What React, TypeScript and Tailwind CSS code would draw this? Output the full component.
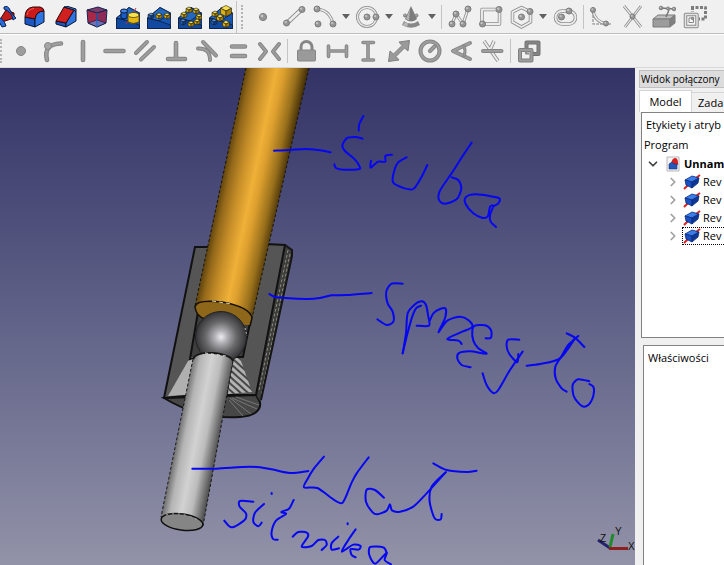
import type { ReactNode } from "react"
import { ChevronDown, ChevronRight } from "lucide-react"

type Tool = { label: string; icon: ReactNode; menu?: boolean }
type Point = [number, number]

/* ---------- Icon building blocks ---------- */

function Icon({ children }: { children: ReactNode }) {
    return (
        <svg viewBox="0 0 24 24" className="w-6 h-6 shrink-0" fill="none" strokeLinejoin="round">
            {children}
        </svg>
    )
}

function Node({ x, y, r = 3 }: { x: number; y: number; r?: number }) {
    return (
        <>
            <circle cx={x} cy={y} r={r} fill="#959595" stroke="#7d7d7d" />
            <circle cx={x - r * 0.3} cy={y - r * 0.3} r={r * 0.4} fill="#c4c4c4" />
        </>
    )
}

// Hollow light line used by the sketch geometry icons
function Tube({ d, w = 3 }: { d: string; w?: number }) {
    return (
        <>
            <path d={d} stroke="#8c8c8c" strokeWidth={w} />
            <path d={d} stroke="#ececec" strokeWidth={w - 1.6} />
        </>
    )
}

// Solid line used by the constraint icons
function Bar({ d, w = 4.6 }: { d: string; w?: number }) {
    return (
        <>
            <path d={d} stroke="#868686" strokeWidth={w} strokeLinecap="round" />
            <path d={d} stroke="#9e9e9e" strokeWidth={w - 2} strokeLinecap="round" />
        </>
    )
}

function Cube({ x, y, s = 6, tone = "yellow" }: { x: number; y: number; s?: number; tone?: "yellow" | "blue" }) {
    const c = tone === "yellow" ? ["#f8e04a", "#dcae14", "#a87f08"] : ["#4f94e8", "#1f63c8", "#0d3f96"]
    const h = s / 2
    return (
        <g stroke="#1c1c10" strokeWidth={0.6}>
            <path d={`M${x} ${y - h}l${h} ${h / 2}l${-h} ${h / 2}l${-h} ${-h / 2}z`} fill={c[0]} />
            <path d={`M${x - h} ${y - h / 2}l${h} ${h / 2}v${h}l${-h} ${-h / 2}z`} fill={c[1]} />
            <path d={`M${x + h} ${y - h / 2}l${-h} ${h / 2}v${h}l${h} ${-h / 2}z`} fill={c[2]} />
        </g>
    )
}

function Base() {
    return (
        <g stroke="#0a1c3c" strokeWidth={0.8}>
            <path d="M.5 13L13 2.5L23.5 8V23.5H.5z" fill="#1556b4" />
            <path d="M.5 13L13 2.5L23.5 8L12 16z" fill="#2468c0" />
            <path d="M.5 13L12 16L23.5 20V23.5H.5z" fill="#1249a0" />
        </g>
    )
}

/* ---------- Toolbars ---------- */

const partTools: Tool[] = [
    {
        label: "Groove",
        icon: (
            <Icon>
                <path d="M9 13L14 5L22 8V13L10 17z" fill="#c01c1c" stroke="#400" />
                <path d="M12 2Q16 0 18 5T24 13L21 15Q20 7 12 4z" fill="#2b6bd8" stroke="#07204f" />
                <path d="M6 12Q12 14 14 21L10 22L6 15z" fill="#2b6bd8" stroke="#07204f" />
            </Icon>
        ),
    },
    {
        label: "Fillet",
        icon: (
            <Icon>
                <path d="M2 12V19L12 22V14z" fill="#1b55c4" stroke="#07152f" />
                <path d="M12 22V14Q13 6 21 6V17z" fill="#2d74e0" stroke="#07152f" />
                <path d="M2 12Q2 3 10 2L17 2Q21 3 21 6Q13 6 12 14z" fill="#cc1a1a" stroke="#2c0505" />
                <path d="M4 10Q5 4 11 3.500" stroke="#ec5a50" />
            </Icon>
        ),
    },
    {
        label: "Chamfer",
        icon: (
            <Icon>
                <path d="M2 16V19L12 22V18z" fill="#1b55c4" stroke="#07152f" />
                <path d="M12 22V18L20 5L22 7V16z" fill="#2d74e0" stroke="#07152f" />
                <path d="M2 16L10 2L20 5L12 18z" fill="#d02020" stroke="#2c0505" />
                <path d="M10 2L14 1.500L22 4V7L20 5z" fill="#3f86ec" stroke="#07152f" />
            </Icon>
        ),
    },
    {
        label: "Draft",
        icon: (
            <Icon>
                <path d="M2 5L13 2L22 5L12 8z" fill="#7a3c6c" stroke="#16264f" />
                <path d="M2 5L12 8V22L3 18z" fill="#a8284a" stroke="#16264f" />
                <path d="M22 5L12 8V22L21 18z" fill="#8c2a58" stroke="#16264f" />
                <path d="M3 18L12 22L21 18L12 15z" fill="#5a8fe0" stroke="#16264f" opacity=".7" />
                <path d="M12 8V22" stroke="#2f6ad0" />
            </Icon>
        ),
    },
    {
        label: "Mirrored",
        icon: (
            <Icon>
                <Base />
                <path d="M5 6v7q3 2 6 0V6z" fill="#1b5cc6" stroke="#061a3e" />
                <ellipse cx="8" cy="6" rx="3.500" ry="2" fill="#3f86e4" stroke="#061a3e" />
                <path d="M10 19L20 3" stroke="#c03040" />
                <path d="M12 10v7q5 3 11 0v-7z" fill="#e2b714" stroke="#4a3a04" strokeWidth=".8" />
                <ellipse cx="17.500" cy="10" rx="5.500" ry="2.500" fill="#fae24e" stroke="#4a3a04" strokeWidth=".8" />
            </Icon>
        ),
    },
    {
        label: "Linear pattern",
        icon: (
            <Icon>
                <Base />
                <Cube x={4} y={11} tone="blue" />
                <Cube x={12} y={11} />
                <Cube x={20} y={11} />
            </Icon>
        ),
    },
    {
        label: "Polar pattern",
        icon: (
            <Icon>
                <Base />
                <Cube x={11} y={5} />
                <Cube x={18} y={6} />
                <Cube x={6} y={10} />
                <Cube x={21} y={12} />
                <Cube x={5} y={17} tone="blue" />
                <Cube x={19} y={17} />
                <Cube x={13} y={19} />
            </Icon>
        ),
    },
    {
        label: "Multi transform",
        icon: (
            <Icon>
                <Base />
                <Cube x={17} y={6} s={11} />
                <Cube x={6} y={9} />
                <Cube x={11} y={13} s={7} />
                <Cube x={5} y={17} tone="blue" />
                <Cube x={17} y={19} s={7} />
            </Icon>
        ),
    },
]

const drawTools: Tool[] = [
    { label: "Point", icon: <Icon><Node x={12} y={12} r={3.6} /></Icon> },
    {
        label: "Line",
        icon: <Icon><Tube d="M5 18L20 4" w={4.500} /><Node x={4.500} y={18} /><Node x={20} y={4.500} /></Icon>,
    },
    {
        label: "Arc",
        menu: true,
        icon: (
            <Icon>
                <Tube d="M4 4Q17 5 20 19" />
                <Node x={4} y={4} />
                <Node x={5} y={19} />
                <Node x={20} y={19} />
            </Icon>
        ),
    },
    {
        label: "Circle",
        menu: true,
        icon: (
            <Icon>
                <Tube d="M1.500 12a9.500 9.500 0 1 0 19 0a9.500 9.500 0 1 0-19 0" />
                <Node x={11} y={12} />
                <Node x={20} y={12} />
            </Icon>
        ),
    },
    {
        label: "Conic",
        menu: true,
        icon: (
            <Icon>
                <path d="M12 1L18 14Q12 19 6 14z" fill="#7c7c7c" />
                <path d="M11 4L7 14L10 15.500z" fill="#b4b4b4" />
                <path d="M5 16Q12 21 19 16L21 20Q12 25.500 3 20z" fill="#888" />
                <path d="M6 17L9 18.500L8 22L4 20z" fill="#b8b8b8" />
                <Node x={6} y={10.500} r={1.500} />
                <Node x={17.500} y={10.500} r={1.500} />
            </Icon>
        ),
    },
]

const shapeTools: Tool[] = [
    {
        label: "Polyline",
        icon: (
            <Icon>
                <Tube d="M4 19L8 9L15 19L20 4" />
                <Node x={4} y={19} />
                <Node x={8} y={9} />
                <Node x={15} y={19} />
                <Node x={20} y={4} />
            </Icon>
        ),
    },
    {
        label: "Rectangle",
        icon: <Icon><Tube d="M3 4.500H20.500V19H3z" w={3.500} /><Node x={3.500} y={19} /><Node x={20} y={4.500} /></Icon>,
    },
    {
        label: "Polygon",
        menu: true,
        icon: (
            <Icon>
                <Tube d="M11.500 2.500L20.500 7V17L11.500 22L2.500 17V7z" w={3.500} />
                <Node x={11.500} y={12} />
                <Node x={20} y={6.500} />
            </Icon>
        ),
    },
    {
        label: "Slot",
        icon: (
            <Icon>
                <Tube d="M9 6H16a6.500 6.500 0 0 1 0 13H9a6.500 6.500 0 0 1 0-13z" w={3.500} />
                <Node x={8.500} y={12} />
                <Node x={16} y={6} />
            </Icon>
        ),
    },
]

const editTools: Tool[] = [
    {
        label: "Fillet edge",
        icon: (
            <Icon>
                <path d="M3 2V19H22" stroke="#a4a4a4" strokeWidth="1.500" strokeDasharray="3 1" />
                <Tube d="M3 6Q5 17 17 19" />
                <Node x={3} y={5} r={2.500} />
                <Node x={16} y={18.500} r={2.500} />
            </Icon>
        ),
    },
    { label: "Trim", icon: <Icon><Tube d="M3 1L20 22M20 1L4 22" w={2.800} /><Node x={11.500} y={11.500} r={2.500} /></Icon> },
    {
        label: "External geometry",
        icon: (
            <Icon>
                <path d="M1 14L6 10H23L18 14z" fill="#bdbdbd" stroke="#7c7c7c" />
                <path d="M1 14H18V22H1z" fill="#9c9c9c" stroke="#7c7c7c" />
                <path d="M18 14L23 10V18L18 22z" fill="#808080" stroke="#7c7c7c" />
                <path d="M14 12L17 5M9 3L22 4" stroke="#777" strokeWidth="1.500" />
                <Node x={9} y={3} r={1.800} />
                <Node x={16} y={3.500} r={1.500} />
                <Node x={22} y={4} r={1.800} />
            </Icon>
        ),
    },
    {
        label: "Carbon copy",
        icon: (
            <Icon>
                <path d="M8 2.500H22.500V14H16M9.500 2V7" stroke="#7c7c7c" strokeWidth="3" strokeDasharray="3 1.500" />
                <path d="M2.500 9.500H14V21.500H2.500z" stroke="#8c8c8c" strokeWidth="3.500" fill="#f4f4f4" />
                <path d="M2.500 9.500H14V21.500H2.500z" stroke="#e4e4e4" strokeWidth="1.500" />
                <path d="M6 13H10.500V17.500H6z" stroke="#858585" fill="#fafafa" />
                <Node x={9.500} y={13.500} r={1.200} />
            </Icon>
        ),
    },
]

const geometricTools: Tool[] = [
    { label: "Coincident", icon: <Icon><circle cx="12" cy="12" r="4.500" fill="#9e9e9e" stroke="#868686" /></Icon> },
    {
        label: "Point on object",
        icon: <Icon><Bar d="M7 21Q3 5 21 4.500" /><circle cx="8" cy="7" r="3.500" fill="#a6a6a6" stroke="#868686" /></Icon>,
    },
    { label: "Vertical", icon: <Icon><Bar d="M12 3V21" /></Icon> },
    { label: "Horizontal", icon: <Icon><Bar d="M3.500 12H21.500" /></Icon> },
    { label: "Parallel", icon: <Icon><Bar d="M3 14L14 3M8 20.500L21 8" w={4} /></Icon> },
    { label: "Perpendicular", icon: <Icon><Bar d="M12 4V19M4 20H21" /></Icon> },
    { label: "Tangent", icon: <Icon><Bar d="M3 9.500Q15 9 15 21M8 3L21 16.500" w={4} /></Icon> },
    { label: "Equal", icon: <Icon><Bar d="M6 7.500H19M6 17H19" /></Icon> },
    { label: "Symmetric", icon: <Icon><Bar d="M3 5L9 12.500L3 20M22 5L16 12.500L22 20" w={4} /></Icon> },
]

const dimensionTools: Tool[] = [
    {
        label: "Lock",
        icon: (
            <Icon>
                <path d="M7 12V8a5.500 5.500 0 0 1 11 0V12" stroke="#868686" strokeWidth="3" />
                <rect x="3.500" y="11" width="18" height="11" rx="1" fill="#9a9a9a" stroke="#868686" />
            </Icon>
        ),
    },
    { label: "Horizontal distance", icon: <Icon><Bar d="M3.500 7V17.500M21.500 7V17.500M4 12H21" w={3.600} /></Icon> },
    { label: "Vertical distance", icon: <Icon><Bar d="M7 3.500H17.500M7 21H17.500M12 4V21" w={3.600} /></Icon> },
    {
        label: "Distance",
        icon: (
            <Icon>
                <path d="M22.500 1.500L21 12L17.500 9L9 17.500L12 21L1.500 22.500L3 12L6.500 15L15 6.500L12 3z" fill="#9a9a9a" stroke="#808080" />
            </Icon>
        ),
    },
    {
        label: "Radius",
        icon: <Icon><Bar d="M2.500 12a9.500 9.500 0 1 0 19 0a9.500 9.500 0 1 0-19 0" w={4} /><Bar d="M12 12L16.500 7.500" w={4} /></Icon>,
    },
    { label: "Angle", icon: <Icon><Bar d="M21 4L4 12L21 20" w={4} /><Bar d="M15 7Q17 12 15 17" w={3} /></Icon> },
    { label: "Refraction", icon: <Icon><Tube d="M4 2L18 22M14 2L10 11" w={3.500} /><Bar d="M3 12H21.500" w={4} /></Icon> },
]

const toggleTools: Tool[] = [
    {
        label: "Toggle reference",
        icon: (
            <Icon>
                <path d="M9.500 3.500H21.500V15H9.500z" stroke="#707070" strokeWidth="4" />
                <path d="M9.500 3.500H21.500V15H9.500z" stroke="#868686" strokeWidth="2" />
                <path d="M3 11H14.500V21.500H3z" stroke="#808080" strokeWidth="4" fill="#f0f0f0" />
                <path d="M3 11H14.500V21.500H3z" stroke="#9c9c9c" strokeWidth="2" />
                <path d="M9 12V14.500H12" stroke="#8a8a8a" strokeWidth="2" />
            </Icon>
        ),
    },
]

function ToolGroup({ tools }: { tools: Tool[] }) {
    return (
        <>
            {tools.map((tool) => (
                <div key={tool.label} className="flex shrink-0">
                    <button type="button" aria-label={tool.label} className="w-[31px] h-8 flex items-center justify-center">
                        {tool.icon}
                    </button>
                    {tool.menu && (
                        <button type="button" aria-label={`${tool.label} menu`} className="w-3 h-8 flex items-center justify-center">
                            <svg viewBox="0 0 8 5" className="w-2 h-[5px]">
                                <path d="M0 0H8L4 5z" fill="#606060" />
                            </svg>
                        </button>
                    )}
                </div>
            ))}
        </>
    )
}

function Separator() {
    return (
        <div className="w-1.5 h-6 shrink-0 flex justify-center">
            <div className="w-px bg-[#c4c4c4]"></div>
        </div>
    )
}

function Handle() {
    return <div className="w-0.5 h-6 shrink-0 border-l-2 border-dotted border-[#b4b4b4]"></div>
}

/* ---------- 3D view ---------- */

// Freehand pen strokes. Each sheet has its own origin and is drawn at a third of its size.
const sheets: { name: string; x: number; y: number; strokes: Point[][] }[] = [
    {
        name: "śruba",
        x: 290,
        y: 100,
        strokes: [
            [[-48, 152], [0, 150], [45, 147], [90, 151], [122, 157]],
            [[220, 48], [208, 72], [206, 92]],
            [[218, 116], [195, 111], [170, 115], [157, 137], [165, 153], [195, 179], [210, 202], [205, 208], [160, 209], [138, 204], [133, 193]],
            [[243, 182], [242, 203], [264, 185], [286, 185], [286, 168], [306, 164]],
            [[350, 172], [324, 188], [312, 215], [309, 247], [340, 264], [370, 267], [395, 230], [412, 195]],
            [[545, 128], [520, 165], [485, 220], [450, 272], [447, 300], [465, 311], [500, 298], [514, 265], [505, 240], [485, 232]],
            [[612, 318], [625, 310], [626, 294], [560, 283], [528, 291], [527, 312], [550, 340], [578, 354], [594, 348], [600, 320], [610, 318], [600, 345], [602, 365], [618, 381]],
        ],
    },
    {
        name: "sprzęgło",
        x: 260,
        y: 270,
        strokes: [
            [[28, 72], [50, 82], [140, 87], [180, 84], [215, 76], [260, 75], [335, 69]],
            [[428, 41], [395, 41], [379, 65], [383, 100], [398, 125], [400, 155], [380, 165], [352, 148]],
            [[428, 250], [438, 190], [443, 130], [465, 103], [485, 94], [498, 105], [505, 140], [507, 167], [470, 167]],
            [[428, 250], [440, 200], [455, 145], [468, 115], [483, 107]],
            [[510, 150], [520, 130], [540, 117], [557, 116], [555, 145], [535, 187], [562, 152], [600, 140], [625, 150], [637, 171], [600, 188], [562, 207], [595, 212], [605, 222]],
            [[677, 205], [693, 203], [693, 180], [675, 166], [645, 167], [637, 180], [640, 212], [655, 235], [680, 251], [630, 244], [598, 249], [592, 265], [605, 285], [632, 292]],
            [[778, 209], [745, 209], [740, 228], [748, 252], [772, 277], [775, 252]],
            [[788, 245], [750, 300], [715, 360], [700, 369], [680, 345], [668, 310]],
            [[800, 287], [840, 282], [900, 265], [945, 205]],
            [[955, 198], [925, 225], [905, 258], [886, 290], [887, 325], [905, 355], [920, 365]],
            [[920, 190], [945, 203], [973, 231]],
            [[988, 342], [1001, 352], [1000, 378], [985, 405], [965, 408], [942, 380], [938, 345], [955, 328], [988, 334]],
        ],
    },
    {
        name: "wał silnika",
        x: 190,
        y: 440,
        strokes: [
            [[7, 86], [80, 86], [180, 80], [240, 87], [300, 99], [355, 93]],
            [[402, 50], [370, 88], [354, 115], [342, 142], [382, 144], [430, 178], [458, 188], [484, 130], [500, 100], [536, 52]],
            [[582, 173], [555, 150], [530, 149], [528, 185], [548, 217], [562, 223], [590, 212], [600, 193], [606, 211], [630, 215], [670, 200], [710, 160], [767, 97]],
            [[767, 97], [725, 140], [719, 185], [734, 235], [752, 238], [755, 222]],
            [[730, 70], [770, 90], [830, 96], [860, 92]],
            [[190, 185], [150, 183], [149, 200], [168, 220], [163, 241], [125, 262], [103, 242]],
            [[222, 192], [195, 218], [190, 245], [205, 259], [215, 248]],
            [[245, 159], [245, 162]],
            [[311, 180], [297, 206], [274, 216], [288, 222], [258, 242], [245, 275], [249, 297], [263, 299]],
            [[308, 290], [325, 276], [350, 278], [354, 290], [335, 320], [365, 318], [385, 300], [405, 300], [410, 315], [395, 330]],
            [[445, 290], [425, 310], [425, 329], [447, 325]],
            [[473, 250], [473, 253]],
            [[497, 268], [475, 300], [455, 335], [490, 314], [512, 318], [505, 329], [482, 327], [485, 345], [497, 352]],
            [[590, 338], [580, 322], [541, 321], [538, 345], [556, 371], [590, 338], [584, 360], [603, 373]],
        ],
    },
]

// Curve that runs through every point of a stroke
function inkPath(points: Point[]) {
    const k = 0.14
    let d = `M${points[0].join(" ")}`
    for (let i = 0; i < points.length - 1; i++) {
        const a = points[i - 1] ?? points[i]
        const b = points[i]
        const c = points[i + 1]
        const e = points[i + 2] ?? c
        d += `C${b[0] + (c[0] - a[0]) * k} ${b[1] + (c[1] - a[1]) * k} ${c[0] - (e[0] - b[0]) * k} ${c[1] - (e[1] - b[1]) * k} ${c[0]} ${c[1]}`
    }
    return d
}

function Assembly() {
    return (
        <svg viewBox="0 68 635 497" preserveAspectRatio="xMidYMid slice" className="block w-full h-full" fill="none">
            <defs>
                <linearGradient id="brass" gradientUnits="userSpaceOnUse" x1="221" y1="180" x2="283" y2="193">
                    <stop offset="0" stopColor="#5a400c" />
                    <stop offset=".12" stopColor="#94691a" />
                    <stop offset=".3" stopColor="#c88f29" />
                    <stop offset=".5" stopColor="#f0b138" />
                    <stop offset=".62" stopColor="#dd9f2e" />
                    <stop offset=".82" stopColor="#99701c" />
                    <stop offset="1" stopColor="#3c2a06" />
                </linearGradient>
                <linearGradient id="steel" gradientUnits="userSpaceOnUse" x1="177" y1="438" x2="218" y2="446">
                    <stop offset="0" stopColor="#707070" />
                    <stop offset=".18" stopColor="#b4b4b4" />
                    <stop offset=".45" stopColor="#d2d2d2" />
                    <stop offset=".68" stopColor="#bcbcbc" />
                    <stop offset="1" stopColor="#4c4c4c" />
                </linearGradient>
                <radialGradient id="ball" cx=".5" cy=".5" r=".5">
                    <stop offset="0" stopColor="#ececf2" />
                    <stop offset=".25" stopColor="#b0b0b4" />
                    <stop offset=".6" stopColor="#69696b" />
                    <stop offset="1" stopColor="#343436" />
                </radialGradient>
                <pattern id="hatch" width="5" height="5" patternUnits="userSpaceOnUse" patternTransform="rotate(42)">
                    <rect width="5" height="5" fill="#b2b2b2" />
                    <rect width="5" height="2" fill="#484848" />
                </pattern>
            </defs>

            {/* Coupling */}
            <path d="M164 398L256 395L260 402Q262 415 240 417Q200 420 164 398z" fill="#474747" stroke="#111" strokeWidth="2" />
            <path d="M232 398L257 409M230 398L251 414M229 400L243 416M236 397L259 405" stroke="#777" />
            <path d="M209 248L252 317L243 357H190z" fill="#3e3e3e" />
            <path d="M195 247H209L198 312L190 359L184 397L164 398z" fill="#555" />
            <path d="M199 306L190 359H195" stroke="#111" strokeWidth="2" />
            <path d="M168 396L188 361L195 358L187 395z" fill="#b0b0b0" />
            <path d="M209 247H195L164 398L186 396" stroke="#111" strokeWidth="2" />
            <path d="M266 244L285 245L256 395H226L233 357H243z" fill="#555" />
            <path d="M233 358H240L252 392L228 394z" fill="url(#hatch)" />
            <path d="M285 245L293 252L261 402L256 395z" fill="#3d3d3d" />
            <path d="M288 250L259 390M290 254L261 396" stroke="#8c8a78" strokeDasharray="3 2" />
            <path d="M266 244L285 245L256 395H226L233 357H243L266 244" stroke="#111" strokeWidth="2" />
            <path d="M285 245L292 250V256L261 400" stroke="#161616" strokeWidth="2" />

            {/* Screw */}
            <path d="M246 67H309L252 318Q250 322 224 313L195 307z" fill="url(#brass)" />
            <path d="M246 68L195 306M309 68L252 318" stroke="#1c1404" strokeDasharray="3 2" />
            <path d="M195 307Q196 299 222 302Q250 307 252 318L250 325Q222 325 203 318Q195 313 195 307z" fill="#8f671b" />
            <path d="M195 307Q196 299 222 302Q250 307 252 318M195 307Q196 316 205 319M252 318L250 326" stroke="#161005" strokeWidth="1.500" />
            <path d="M212 301L232 304" stroke="#d8d0b0" strokeDasharray="4 3" />

            {/* Ball */}
            <circle cx="221" cy="337" r="25.500" fill="url(#ball)" stroke="#222" />
            <path d="M245 328L247 336" stroke="#bbb" strokeDasharray="2 2" />

            {/* Motor shaft */}
            <path d="M193 359Q196 352 213 353Q231 355 233 361L203 526L161 517z" fill="url(#steel)" />
            <path d="M193 359L161 517M233 361L203 526" stroke="#1a1a1a" strokeDasharray="3 2" />
            <path d="M193 359Q196 352 213 353Q231 355 233 361" stroke="#161616" strokeWidth="2" />
            <path d="M205 353L226 356" stroke="#ddd" strokeDasharray="3 3" />
            <ellipse cx="182" cy="522" rx="21" ry="8" transform="rotate(8 182 522)" fill="#858585" stroke="#111" strokeWidth="1.500" />
            <path d="M166 515Q182 511 200 521" stroke="#aaa" strokeDasharray="2 4" />

            {/* Handwritten notes */}
            {sheets.map((sheet) => (
                <g
                    key={sheet.name}
                    role="img"
                    aria-label={sheet.name}
                    transform={`translate(${sheet.x} ${sheet.y}) scale(.3333)`}
                    stroke="#0606f0"
                    strokeWidth="6"
                    strokeLinecap="round"
                    strokeLinejoin="round"
                >
                    {sheet.strokes.map((points, i) => (
                        <path key={i} d={inkPath(points)} />
                    ))}
                </g>
            ))}
        </svg>
    )
}

function AxisCross() {
    return (
        <svg viewBox="0 0 40 40" className="absolute right-0 bottom-1 w-10 h-10" fontFamily="Liberation Sans" fontSize="10">
            <path d="M15 27L3 19" stroke="#23236e" strokeWidth="3" />
            <path d="M15 26L18 13" stroke="#1f8a2c" strokeWidth="3" />
            <path d="M14 27.500H33" stroke="#8e1f1f" strokeWidth="3" />
            <text x="5" y="21" fill="#111">Z</text>
            <text x="20" y="14" fill="#111">Y</text>
            <text x="33" y="29" fill="#111">X</text>
        </svg>
    )
}

/* ---------- Side panel ---------- */

function SolidIcon() {
    return (
        <svg viewBox="0 0 18 16" className="w-[18px] h-4 shrink-0" strokeLinejoin="round">
            <path d="M1 15L5 11M13 4L17 1" stroke="#e02020" strokeWidth="2" />
            <path d="M2 6L9 2L16 4L9 8z" fill="#3b7ce8" stroke="#0a2c7c" strokeWidth=".8" />
            <path d="M2 6L9 8V14L3 11z" fill="#1a50c4" stroke="#0a2c7c" strokeWidth=".8" />
            <path d="M16 4L9 8V14L15 9z" fill="#0e3796" stroke="#0a2c7c" strokeWidth=".8" />
        </svg>
    )
}

function DocumentIcon() {
    return (
        <svg viewBox="0 0 14 16" className="w-3.5 h-4 shrink-0">
            <path d="M1 1H13V15H1z" fill="#f4f4f4" stroke="#b8b8b8" />
            <path d="M5 8Q6 2 9 2T12 7V9L8 8z" fill="#d42020" />
            <path d="M3 8L6 6L8 8H11V13H3z" fill="#2457b8" stroke="#12347c" strokeWidth=".6" />
        </svg>
    )
}

function ModelTree() {
    return (
        <ul>
            <li>
                <button type="button" className="flex items-center h-[18px] pl-1">
                    <ChevronDown size={14} strokeWidth={3} className="text-[#404040] shrink-0" />
                    <span className="w-1.5"></span>
                    <DocumentIcon />
                    <span className="pl-1 font-bold">Unnam</span>
                </button>
                <ul>
                    {[1, 2, 3, 4].map((n) => (
                        <li key={n} className="flex items-center h-[18px] pl-6">
                            <ChevronRight size={14} strokeWidth={3} className="text-[#a0a0a0] shrink-0" />
                            <button
                                type="button"
                                className={`flex items-center h-[18px] ml-0.5 w-24 shrink-0 border border-dotted ${n === 4 ? "border-black" : "border-transparent"}`}
                            >
                                <SolidIcon />
                                <span className="pl-0.5">Rev</span>
                            </button>
                        </li>
                    ))}
                </ul>
            </li>
        </ul>
    )
}

export default function App() {
    return (
        <div className="h-screen flex flex-col overflow-hidden bg-[#f0f0f0] text-black text-[11px] leading-4 font-['Open_Sans','Noto_Sans',sans-serif] whitespace-nowrap">
            {/* Toolbars */}
            <div role="toolbar" className="h-[34px] shrink-0 flex items-center border-b border-[#bcbcbc]">
                <div className="flex -ml-3 border-r border-[#c4c4c4]">
                    <ToolGroup tools={partTools} />
                </div>
                <div className="flex items-center pl-1">
                    <Handle />
                    <span className="w-1"></span>
                    <ToolGroup tools={drawTools} />
                    <Separator />
                    <ToolGroup tools={shapeTools} />
                    <Separator />
                    <ToolGroup tools={editTools} />
                </div>
            </div>
            <div role="toolbar" className="h-[34px] shrink-0 flex items-center border-t border-t-white border-b border-b-[#d8d8d8]">
                <Handle />
                <span className="w-[3px]"></span>
                <ToolGroup tools={geometricTools} />
                <Separator />
                <ToolGroup tools={dimensionTools} />
                <Separator />
                <ToolGroup tools={toggleTools} />
            </div>

            <div className="flex-1 min-h-0 flex">
                {/* 3D view */}
                <main className="relative flex-1 min-w-0 bg-linear-to-b from-[#333366] to-[#9292a8]">
                    <Assembly />
                    <AxisCross />
                </main>

                {/* Side panel */}
                <aside className="w-[89px] shrink-0 flex flex-col pl-1 pt-0.5 overflow-hidden">
                    <h2 className="h-[18px] shrink-0 pl-px border border-r-0 border-[#c0c0c0] bg-[#dcdcdc] text-[10px]">Widok połączony</h2>
                    <div role="tablist" className="flex shrink-0 h-6 pt-0.5">
                        <button type="button" role="tab" aria-selected="true" className="w-[53px] shrink-0 border border-b-0 border-[#d4d4d4] bg-white text-center">
                            Model
                        </button>
                        <button type="button" role="tab" aria-selected="false" className="w-16 shrink-0 mt-0.5 pl-1.5 border-t border-[#d4d4d4] text-left">
                            Zada
                        </button>
                    </div>
                    <section className="h-[226px] shrink-0 ml-0.5 pl-1 pt-1 border border-r-0 border-[#828282] bg-white">
                        <p className="h-5">Etykiety i atryb</p>
                        <p className="h-[18px] -ml-0.5">Program</p>
                        <div className="-ml-1">
                            <ModelTree />
                        </div>
                    </section>
                    <section className="flex-1 mt-[7px] ml-1 pl-1 pt-1 border border-r-0 border-b-0 border-[#828282] bg-white">
                        <p>Właściwości</p>
                    </section>
                </aside>
            </div>
        </div>
    )
}
